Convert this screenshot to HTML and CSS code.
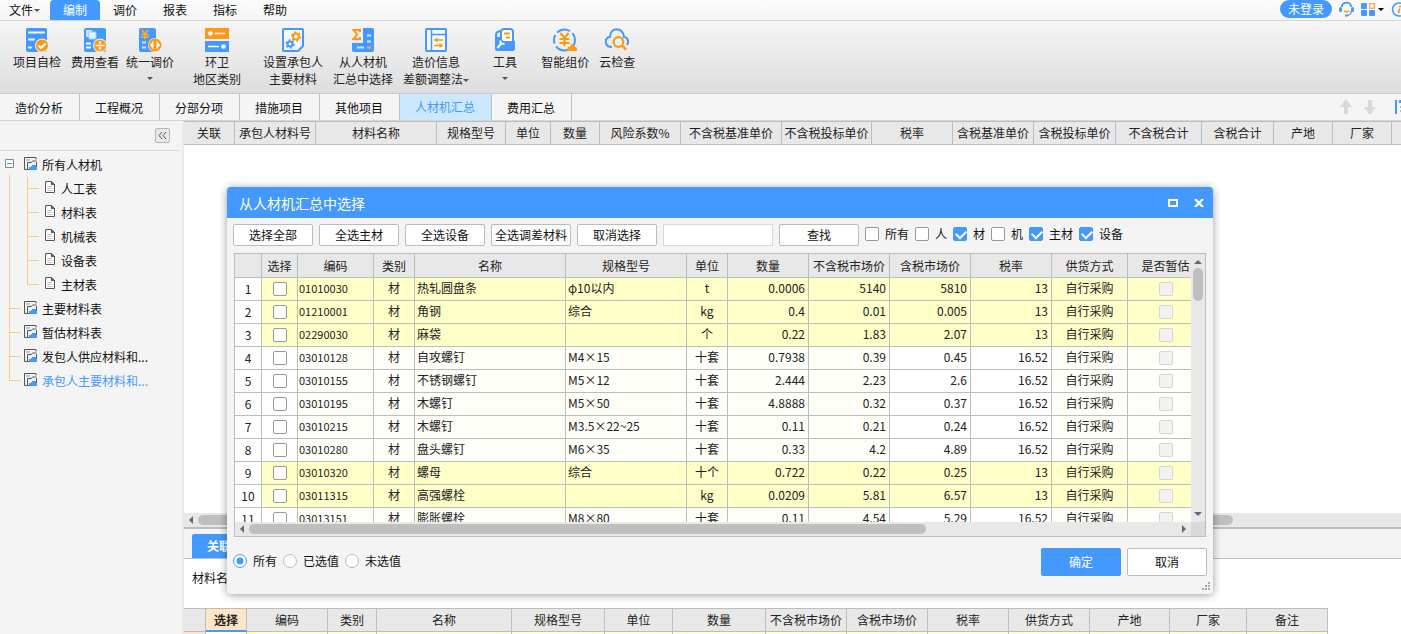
FILE: index.html
```html
<!DOCTYPE html>
<html lang="zh-CN">
<head>
    <meta charset="UTF-8">
    <meta name="viewport" content="width=device-width, initial-scale=1.0">
    <title>人材机汇总</title>
    <link rel="stylesheet" href="styles.css">
</head>

<body>
    <svg class="defs" width="0" height="0" aria-hidden="true">
        <symbol id="i-report" viewBox="0 0 13 13">
            <path d="M5 12.500H.5V.5h11.500v2M12.500 5v7.500H5" fill="none" stroke="#555"/>
            <path d="M3.500 12V5.500h4l1-1.500h4" fill="none" stroke="#555"/>
            <path d="M2 2h4v2H2z" fill="#9cf"/>
            <path d="M5 13v-3h2l1-2h4v1l1 1v3z" fill="#49f"/>
        </symbol>
        <symbol id="i-page" viewBox="0 0 10 12">
            <path d="M.5.500h6l3 3v8h-9z" fill="#fff" stroke="#555"/>
            <path d="M6.500.5v3h3" fill="#555" stroke="#555"/>
            <path d="M2 5.500h5M2 7.500h5M2 9.500h5" stroke="#ccc"/>
        </symbol>
    </svg>

    <header class="menubar">
        <nav class="menu">
            <a class="file" href="#">文件<span class="caret"></span></a>
            <a class="on" href="#">编制</a>
            <a href="#">调价</a>
            <a href="#">报表</a>
            <a href="#">指标</a>
            <a href="#">帮助</a>
        </nav>
        <div class="user">
            <button class="login">未登录</button>
            <svg class="headset" width="15" height="16" viewBox="0 0 15 16">
                <path d="M12.500 10c-.5 3-2.500 4.500-5 4.500" fill="none" stroke="#49f" stroke-width="1.500"/>
                <path d="M2.800 6C2.800.2 12.200.2 12.200 6" fill="none" stroke="#49f" stroke-width="1.800"/>
                <rect x="0" y="6" width="3" height="5" rx="1.500" fill="#49f"/>
                <rect x="12" y="6" width="3" height="5" rx="1.500" fill="#49f"/>
                <path d="M5 9.500c1.500 1.800 3.500 1.800 5 0" fill="none" stroke="#f93" stroke-width="1.800"/>
                <circle cx="7.500" cy="14.500" r="1.300" fill="#49f"/>
            </svg>
            <svg width="14" height="14" viewBox="0 0 14 14">
                <rect x="0" y="1" width="6" height="6" rx="1" fill="#49f"/>
                <rect x="8.700" y="1.700" width="4.600" height="4.600" fill="#fff" stroke="#fa4" stroke-width="1.400"/>
                <rect x="0" y="8" width="6" height="6" rx="1" fill="#49f"/>
                <rect x="8" y="8" width="6" height="6" rx="1" fill="#49f"/>
            </svg>
            <span class="caret black"></span>
            <svg width="16" height="16" viewBox="0 0 16 16">
                <circle cx="8" cy="8.500" r="6.500" fill="none" stroke="#49f" stroke-width="1.500"/>
                <path d="M9 4.500v1.800M8.500 7.500l-1 4.500" stroke="#f93" stroke-width="2"/>
            </svg>
        </div>
    </header>

    <div class="ribbon">
        <div class="group">
            <button>
                <svg width="24" height="24" viewBox="0 0 24 24">
                    <rect x="1" width="21" height="24" rx="2" fill="#49f"/>
                    <path d="M4 4.500h15M4 11.500h5M4 19.500h2" stroke="#fff" stroke-width="2" stroke-linecap="round"/>
                    <circle cx="17" cy="17.500" r="7" fill="#eee"/>
                    <circle cx="17" cy="17.500" r="6" fill="#f91"/>
                    <path d="M13.500 17.500l2.500 2.500 4.500-4.500" fill="none" stroke="#fff" stroke-width="2"/>
                </svg>
                <span>项目自检</span>
            </button>
            <button>
                <svg width="24" height="24" viewBox="0 0 24 24">
                    <rect x="1" width="22" height="24" rx="2" fill="#49f"/>
                    <path d="M3 2h6v7H3z" fill="#cfe4ff"/>
                    <path d="M6 4h7v7H6z" fill="#e8f2ff" stroke="#9cf"/>
                    <path d="M3 15.500h5M3 19.500h5" stroke="#fff" stroke-width="2"/>
                    <circle cx="17" cy="17.500" r="7" fill="#eee"/>
                    <circle cx="17" cy="17.500" r="6" fill="#f91"/>
                    <path d="M12.500 17.500h9" stroke="#fff" stroke-width="1.600"/>
                    <circle cx="17" cy="14.500" r="1.300" fill="#fff"/>
                    <circle cx="17" cy="20.500" r="1.300" fill="#fff"/>
                </svg>
                <span>费用查看</span>
            </button>
            <button class="drop">
                <svg width="24" height="24" viewBox="0 0 24 24">
                    <rect x="1" width="17" height="24" rx="2" fill="#49f"/>
                    <path d="M4 2l3 4 3-4M3 6.500h8M3 9h8M7 6v5" fill="none" stroke="#fa2" stroke-width="1.700"/>
                    <path d="M4 14.500h4M4 19.500h4" stroke="#cfe4ff" stroke-width="1.800"/>
                    <circle cx="17" cy="17" r="7" fill="#eee"/>
                    <circle cx="17" cy="17" r="6.500" fill="#f91"/>
                    <path d="M15.500 12.500v9l-3.500-4.500zM18.500 12.500v9l3.500-4.500z" fill="#fff"/>
                </svg>
                <span>统一调价</span>
                <i class="caret"></i>
            </button>
        </div>
        <div class="group">
            <button>
                <svg width="24" height="24" viewBox="0 0 24 24">
                    <path d="M0 0h24v11H0z" fill="#f91"/>
                    <path d="M0 13h24v11H0z" fill="#49f"/>
                    <path d="M10 5.500h10M3 18.500h11" stroke="#fff" stroke-width="1.600"/>
                    <circle cx="5.500" cy="5.500" r="2.300" fill="#fff"/>
                    <circle cx="18.500" cy="18.500" r="2.300" fill="#fff"/>
                </svg>
                <span>环卫<br>地区类别</span>
            </button>
        </div>
        <div class="group">
            <button>
                <svg width="24" height="24" viewBox="0 0 24 24">
                    <path d="M3 1h18q1 0 1 1v16l-5 5H3q-1 0-1-1V2q0-1 1-1z" fill="#f6faff" stroke="#49f" stroke-width="2"/>
                    <circle cx="15" cy="8.500" r="3" fill="none" stroke="#f91" stroke-width="2"/>
                    <circle cx="15" cy="8.500" r="4.500" fill="none" stroke="#f91" stroke-width="1.400" stroke-dasharray="2.200 2.500"/>
                    <circle cx="9" cy="16" r="2.500" fill="none" stroke="#49f" stroke-width="2"/>
                    <circle cx="9" cy="16" r="4" fill="none" stroke="#49f" stroke-width="1.400" stroke-dasharray="2 2.200"/>
                </svg>
                <span>设置承包人<br>主要材料</span>
            </button>
            <button>
                <svg width="24" height="24" viewBox="0 0 24 24">
                    <path d="M12 0h9q2 0 2 2v20q0 2-2 2H3q-2 0-2-2v-7h11z" fill="#49f"/>
                    <path d="M9 4V2H2.500l3.500 4.500L2.500 11H9V9" fill="none" stroke="#f91" stroke-width="2"/>
                    <path d="M16 7.500h4M16 13.500h4M6 19.500h7" stroke="#cfe4ff" stroke-width="1.800"/>
                    <path d="M16 19.500h4" stroke="#fa2" stroke-width="2"/>
                </svg>
                <span>从人材机<br>汇总中选择</span>
            </button>
            <button>
                <svg width="24" height="24" viewBox="0 0 24 24">
                    <rect x="2" y="1" width="20" height="22" rx="1" fill="#f4f9ff" stroke="#49f" stroke-width="2"/>
                    <path d="M7.500 1v22M7.500 6.500H22" stroke="#49f" stroke-width="1.500"/>
                    <path d="M10 12h9M10 17.500h9" stroke="#f91" stroke-width="1.500"/>
                    <path d="M10 12l3.500-2.500v5zM19 17.500L15.500 15v5z" fill="#f91"/>
                </svg>
                <span>造价信息<br>差额调整法<i class="caret inline"></i></span>
            </button>
        </div>
        <div class="group">
            <button>
                <svg width="24" height="24" viewBox="0 0 24 24">
                    <path d="M3 11V7q0-3 4-4" fill="none" stroke="#49f" stroke-width="2"/>
                    <path d="M8 14V4q0-3 3-3h6q3 0 3 3v12" fill="#fff" stroke="#49f" stroke-width="2"/>
                    <path d="M11 5.500h6M13 9.500h4" stroke="#f91" stroke-width="2"/>
                    <path d="M2 9h5l3 4h12v8q0 2-2 2H4q-2 0-2-2z" fill="#49f"/>
                    <path d="M4.500 20l4-5" stroke="#fff" stroke-width="2.200"/>
                    <path d="M7.500 12.500q-1 4 4 3" fill="none" stroke="#fff" stroke-width="2"/>
                </svg>
                <span>工具</span>
                <i class="caret"></i>
            </button>
        </div>
        <div class="group">
            <button>
                <svg width="24" height="24" viewBox="0 0 24 24">
                    <circle cx="11.500" cy="12" r="10.500" fill="none" stroke="#49f" stroke-width="2" stroke-dasharray="9 3 14 3"/>
                    <path d="M7.500 5l4 5 4-5M6.500 11h10M6.500 15h10M11.500 10v8" fill="none" stroke="#f91" stroke-width="2.200"/>
                    <path d="M14.500 23q-1-4.500 2.500-4.500 2-5.500 4.500 0 3 0 2.500 4.500z" fill="#f91"/>
                </svg>
                <span>智能组价</span>
            </button>
            <button>
                <svg width="24" height="24" viewBox="0 0 24 24">
                    <path d="M7 19C-1 19-1 9 5 9 5-1.500 18-1.500 19 9c4 0 5 5 3 8" fill="none" stroke="#49f" stroke-width="2"/>
                    <circle cx="13.500" cy="14" r="4.800" fill="none" stroke="#f91" stroke-width="2.200"/>
                    <path d="M17 17.500l4 4" stroke="#f91" stroke-width="2.500"/>
                </svg>
                <span>云检查</span>
            </button>
        </div>
    </div>

    <nav class="tabs">
        <a href="#">造价分析</a>
        <a href="#">工程概况</a>
        <a href="#">分部分项</a>
        <a href="#">措施项目</a>
        <a href="#">其他项目</a>
        <a class="on" href="#">人材机汇总</a>
        <a href="#">费用汇总</a>
        <div class="move">
            <svg width="12" height="16" viewBox="0 0 12 16"><path d="M6 0l6 8H8v7H4V8H0z" fill="#d8d8d8"/></svg>
            <svg width="12" height="16" viewBox="0 0 12 16"><path d="M6 16l6-8H8V1H4v7H0z" fill="#d8d8d8"/></svg>
            <svg width="16" height="16" viewBox="0 0 16 16">
                <path d="M1 1v14" stroke="#49f" stroke-width="2"/>
                <path d="M4 2.500h12" stroke="#49f" stroke-width="3"/>
                <path d="M5 8h10M5 12h10" stroke="#fa4" stroke-width="2"/>
            </svg>
        </div>
    </nav>

    <div class="main">
        <aside class="side">
            <div class="side-top">
                <button class="fold" aria-label="收起">
                    <svg width="9" height="9" viewBox="0 0 9 9"><path d="M4 1L1 4.500 4 8M8 1L5 4.500 8 8" fill="none" stroke="#555"/></svg>
                </button>
            </div>
            <ul class="tree">
                <li>
                    <div class="node root">
                        <svg width="9" height="9" viewBox="0 0 9 9"><path d="M.5.500h8v8h-8z" fill="#fff" stroke="#888"/><path d="M2 4.500h5" stroke="#3ac"/></svg>
                        <svg width="13" height="13"><use href="#i-report"/></svg>
                        <a href="#">所有人材机</a>
                    </div>
                    <ul class="sub">
                        <li class="node"><svg width="10" height="12"><use href="#i-page"/></svg><a href="#">人工表</a></li>
                        <li class="node"><svg width="10" height="12"><use href="#i-page"/></svg><a href="#">材料表</a></li>
                        <li class="node"><svg width="10" height="12"><use href="#i-page"/></svg><a href="#">机械表</a></li>
                        <li class="node"><svg width="10" height="12"><use href="#i-page"/></svg><a href="#">设备表</a></li>
                        <li class="node"><svg width="10" height="12"><use href="#i-page"/></svg><a href="#">主材表</a></li>
                    </ul>
                </li>
                <li class="node top"><svg width="13" height="13"><use href="#i-report"/></svg><a href="#">主要材料表</a></li>
                <li class="node top"><svg width="13" height="13"><use href="#i-report"/></svg><a href="#">暂估材料表</a></li>
                <li class="node top"><svg width="13" height="13"><use href="#i-report"/></svg><a href="#">发包人供应材料和...</a></li>
                <li class="node top"><svg width="13" height="13"><use href="#i-report"/></svg><a class="on" href="#">承包人主要材料和...</a></li>
            </ul>
        </aside>

        <section class="content">
            <div class="grid-box">
                <table class="grid">
                    <colgroup>
                        <col class="w51"><col class="w81"><col class="w121"><col class="w69"><col class="w45"><col class="w49"><col class="w81"><col class="w101"><col class="w90"><col class="w81"><col class="w81"><col class="w82"><col class="w86"><col class="w72"><col class="w59"><col class="w59"><col>
                    </colgroup>
                    <thead>
                        <tr>
                            <th>关联</th><th>承包人材料号</th><th>材料名称</th><th>规格型号</th><th>单位</th><th>数量</th><th>风险系数%</th><th>不含税基准单价</th><th>不含税投标单价</th><th>税率</th><th>含税基准单价</th><th>含税投标单价</th><th>不含税合计</th><th>含税合计</th><th>产地</th><th>厂家</th><th></th>
                        </tr>
                    </thead>
                </table>
            </div>
            <div class="hbar page-bar"><i class="arrow left"></i><div class="track"><div class="thumb"></div></div></div>

            <div class="panel-tabs"><a href="#">关联明细</a></div>
            <p class="info">材料名称：</p>
            <table class="grid detail">
                <colgroup>
                    <col class="w22"><col class="w41"><col class="w81"><col class="w49"><col class="w135"><col class="w93"><col class="w68"><col class="w93"><col class="w81"><col class="w81"><col class="w81"><col class="w81"><col class="w80"><col class="w77"><col class="w81">
                </colgroup>
                <thead>
                    <tr>
                        <th></th><th class="cur">选择</th><th>编码</th><th>类别</th><th>名称</th><th>规格型号</th><th>单位</th><th>数量</th><th>不含税市场价</th><th>含税市场价</th><th>税率</th><th>供货方式</th><th>产地</th><th>厂家</th><th>备注</th>
                    </tr>
                </thead>
                <tbody>
                    <tr><td class="mark"></td><td class="sel"></td><td></td><td></td><td></td><td></td><td></td><td></td><td></td><td></td><td></td><td></td><td></td><td></td><td></td></tr>
                </tbody>
            </table>
        </section>
    </div>

    <div class="dialog" role="dialog" aria-labelledby="dlg-title">
        <div class="title">
            <h1 id="dlg-title">从人材机汇总中选择</h1>
            <button aria-label="最大化"><svg width="10" height="8" viewBox="0 0 10 8"><path d="M1 1h8v6H1z" fill="none" stroke="#fff" stroke-width="2"/></svg></button>
            <button aria-label="关闭"><svg width="10" height="8" viewBox="0 0 10 8"><path d="M1 0l8 8M9 0L1 8" stroke="#fff" stroke-width="2.400"/></svg></button>
        </div>
        <div class="tools">
            <button class="btn">选择全部</button>
            <button class="btn">全选主材</button>
            <button class="btn">全选设备</button>
            <button class="btn">全选调差材料</button>
            <button class="btn">取消选择</button>
            <input class="key" type="text" aria-label="查找内容">
            <button class="btn">查找</button>
            <label><input type="checkbox">所有</label>
            <label><input type="checkbox">人</label>
            <label><input type="checkbox" checked>材</label>
            <label><input type="checkbox">机</label>
            <label><input type="checkbox" checked>主材</label>
            <label><input type="checkbox" checked>设备</label>
        </div>

        <div class="list">
            <div class="view">
                <table class="grid data">
                    <colgroup>
                        <col class="w27"><col class="w36"><col class="w76"><col class="w41"><col class="w151"><col class="w121"><col class="w41"><col class="w81"><col class="w81"><col class="w81"><col class="w81"><col class="w76"><col class="w76">
                    </colgroup>
                    <thead>
                        <tr><th></th><th>选择</th><th>编码</th><th>类别</th><th>名称</th><th>规格型号</th><th>单位</th><th>数量</th><th>不含税市场价</th><th>含税市场价</th><th>税率</th><th>供货方式</th><th>是否暂估</th></tr>
                    </thead>
                    <tbody>
                        <tr class="y"><th>1</th><td><input type="checkbox" aria-label="选择1"></td><td>01010030</td><td>材</td><td>热轧圆盘条</td><td>φ10以内</td><td>t</td><td>0.0006</td><td>5140</td><td>5810</td><td>13</td><td>自行采购</td><td><input type="checkbox" aria-label="暂估1" disabled></td></tr>
                        <tr class="y"><th>2</th><td><input type="checkbox" aria-label="选择2"></td><td>01210001</td><td>材</td><td>角钢</td><td>综合</td><td>kg</td><td>0.4</td><td>0.01</td><td>0.005</td><td>13</td><td>自行采购</td><td><input type="checkbox" aria-label="暂估2" disabled></td></tr>
                        <tr class="y"><th>3</th><td><input type="checkbox" aria-label="选择3"></td><td>02290030</td><td>材</td><td>麻袋</td><td></td><td>个</td><td>0.22</td><td>1.83</td><td>2.07</td><td>13</td><td>自行采购</td><td><input type="checkbox" aria-label="暂估3" disabled></td></tr>
                        <tr><th>4</th><td><input type="checkbox" aria-label="选择4"></td><td>03010128</td><td>材</td><td>自攻螺钉</td><td>M4×15</td><td>十套</td><td>0.7938</td><td>0.39</td><td>0.45</td><td>16.52</td><td>自行采购</td><td><input type="checkbox" aria-label="暂估4" disabled></td></tr>
                        <tr><th>5</th><td><input type="checkbox" aria-label="选择5"></td><td>03010155</td><td>材</td><td>不锈钢螺钉</td><td>M5×12</td><td>十套</td><td>2.444</td><td>2.23</td><td>2.6</td><td>16.52</td><td>自行采购</td><td><input type="checkbox" aria-label="暂估5" disabled></td></tr>
                        <tr><th>6</th><td><input type="checkbox" aria-label="选择6"></td><td>03010195</td><td>材</td><td>木螺钉</td><td>M5×50</td><td>十套</td><td>4.8888</td><td>0.32</td><td>0.37</td><td>16.52</td><td>自行采购</td><td><input type="checkbox" aria-label="暂估6" disabled></td></tr>
                        <tr><th>7</th><td><input type="checkbox" aria-label="选择7"></td><td>03010215</td><td>材</td><td>木螺钉</td><td>M3.5×22~25</td><td>十套</td><td>0.11</td><td>0.21</td><td>0.24</td><td>16.52</td><td>自行采购</td><td><input type="checkbox" aria-label="暂估7" disabled></td></tr>
                        <tr><th>8</th><td><input type="checkbox" aria-label="选择8"></td><td>03010280</td><td>材</td><td>盘头螺钉</td><td>M6×35</td><td>十套</td><td>0.33</td><td>4.2</td><td>4.89</td><td>16.52</td><td>自行采购</td><td><input type="checkbox" aria-label="暂估8" disabled></td></tr>
                        <tr class="y"><th>9</th><td><input type="checkbox" aria-label="选择9"></td><td>03010320</td><td>材</td><td>螺母</td><td>综合</td><td>十个</td><td>0.722</td><td>0.22</td><td>0.25</td><td>13</td><td>自行采购</td><td><input type="checkbox" aria-label="暂估9" disabled></td></tr>
                        <tr class="y"><th>10</th><td><input type="checkbox" aria-label="选择10"></td><td>03011315</td><td>材</td><td>高强螺栓</td><td></td><td>kg</td><td>0.0209</td><td>5.81</td><td>6.57</td><td>13</td><td>自行采购</td><td><input type="checkbox" aria-label="暂估10" disabled></td></tr>
                        <tr><th>11</th><td><input type="checkbox" aria-label="选择11"></td><td>03013151</td><td>材</td><td>膨胀螺栓</td><td>M8×80</td><td>十套</td><td>0.11</td><td>4.54</td><td>5.29</td><td>16.52</td><td>自行采购</td><td><input type="checkbox" aria-label="暂估11" disabled></td></tr>
                    </tbody>
                </table>
            </div>
            <div class="vbar"><i class="arrow up"></i><div class="thumb"></div><i class="arrow down"></i></div>
            <div class="hbar"><i class="arrow left"></i><div class="track"><div class="thumb"></div></div><i class="arrow right"></i></div>
            <div class="corner"></div>
        </div>

        <div class="foot">
            <label><input type="radio" name="range" checked>所有</label>
            <label><input type="radio" name="range">已选值</label>
            <label><input type="radio" name="range">未选值</label>
            <button class="btn ok">确定</button>
            <button class="btn">取消</button>
        </div>
        <svg class="grip" width="8" height="8" viewBox="0 0 8 8"><path d="M6 0h2v2H6zM3 3h2v2H3zM6 3h2v2H6zM0 6h2v2H0zM3 6h2v2H3zM6 6h2v2H6z" fill="#aaa"/></svg>
    </div>
</body>

</html>
```
FILE: styles.css
```css
* {
    box-sizing: border-box;
}

body {
    margin: 0;
    height: 100vh;
    display: flex;
    flex-direction: column;
    overflow: hidden;
    position: relative;
    background: #fff;
    color: #111;
    font: 12px/16px "Noto Sans CJK SC", "Liberation Sans", sans-serif;
}

a {
    color: inherit;
    text-decoration: none;
}

button {
    margin: 0;
    padding: 0;
    border: 0;
    background: none;
    color: inherit;
    font: inherit;
    white-space: nowrap;
}

ul {
    margin: 0;
    padding: 0;
    list-style: none;
}

svg {
    display: block;
    flex: none;
}

.defs {
    position: absolute;
}

.caret {
    border: 3px solid transparent;
    border-top-color: #555;
    border-bottom: 0;
}

.caret.black {
    border-top-color: #000;
}

/* 菜单 */
.menubar {
    flex: none;
    display: flex;
    justify-content: space-between;
    height: 21px;
    overflow: hidden;
    background: linear-gradient(#fbfbfb, #f5f5f5);
    border-bottom: 1px solid #d6d6d6;
}

.menu {
    display: flex;
}

.menu a {
    width: 50px;
    line-height: 20px;
    text-align: center;
}

.menu .file {
    display: flex;
    align-items: center;
    gap: 1px;
    padding-left: 9px;
}

.menu .on {
    background: #49f;
    color: #fff;
    border-radius: 4px 4px 0 0;
}

.user {
    display: flex;
    align-items: center;
    gap: 7px;
    height: 18px;
    margin-right: -6px;
}

.user .caret {
    margin-left: -4px;
}

.login {
    width: 52px;
    height: 18px;
    line-height: 18px;
    border-radius: 9px;
    background: #49f;
    color: #fff;
}

/* 工具栏 */
.ribbon {
    flex: none;
    display: flex;
    gap: 12px;
    height: 73px;
    padding: 7px 8px 0;
    background: linear-gradient(#f5f5f5, #dedede);
    border-bottom: 1px solid #c9c9c9;
}

.group {
    display: flex;
    align-items: flex-start;
}

.group:nth-child(n+4) {
    margin-left: 2px;
}

.ribbon button {
    display: flex;
    flex-direction: column;
    align-items: center;
    padding: 0 5px;
    line-height: 17px;
    color: #222;
}

.ribbon button.drop {
    padding: 0 2px;
}

.ribbon button > span {
    margin-top: 1px;
}

.ribbon button > .caret {
    margin-top: 7px;
}

.caret.inline {
    display: inline-block;
    vertical-align: middle;
}

.tabs {
    flex: none;
    display: flex;
    height: 27px;
    background: #f5f5f5;
    border-bottom: 1px solid #d6d6d6;
}

.tabs a {
    padding: 0 16px 0 15px;
    line-height: 28px;
    border-right: 1px solid #c0c0c0;
}

.tabs .on {
    background: #cce8ff;
    color: #49f;
    line-height: 26px;
}

.move {
    flex: 1;
    display: flex;
    justify-content: flex-end;
    align-items: center;
    gap: 12px;
    margin-right: -10px;
    overflow: hidden;
}

.move svg:last-child {
    margin-left: 7px;
}

.main {
    flex: 1;
    min-height: 0;
    display: flex;
}

/* 左侧树 */
.side {
    flex: none;
    width: 184px;
    background: #f4f4f4;
    border-right: 2px solid #eaeaea;
}

.side-top {
    display: flex;
    justify-content: flex-end;
    align-items: center;
    width: 180px;
    height: 30px;
    padding-right: 10px;
    border-bottom: 1px solid #dcdcdc;
}

.fold {
    width: 15px;
    height: 15px;
    padding: 2px;
    border: 1px solid #b5b5b5;
    border-radius: 2px;
    background: #e8e8e8;
}

.tree {
    margin-top: 2px;
    background: linear-gradient(#fdc886, #fdc886) no-repeat 9px 22px / 1px calc(100% - 35px);
}

.sub {
    background: linear-gradient(#fdc886, #fdc886) no-repeat 27px 0 / 1px calc(100% - 13px);
}

.node {
    display: flex;
    height: 24px;
    line-height: 24px;
    white-space: nowrap;
}

.node svg {
    margin-top: 4px;
}

.node a {
    margin-left: 5px;
}

.node .on {
    color: #49f;
}

.root {
    padding-left: 5px;
}

.root svg:first-child {
    margin: 6px 10px 0 0;
}

.top::before,
.sub .node::before {
    content: "";
    width: 12px;
    height: 11px;
    margin: 0 3px 0 9px;
    border-bottom: 1px solid #fdc886;
}

.sub .node::before {
    margin: 0 6px 0 27px;
}

.sub .node a {
    margin-left: 6px;
}

/* 表格 */
.content {
    flex: 1;
    min-width: 0;
    display: flex;
    flex-direction: column;
}

.grid {
    table-layout: fixed;
    width: 100%;
    border-spacing: 0;
    border-top: 1px solid #bdbdbd;
    color: #222;
}

.grid th,
.grid td {
    padding: 0;
    line-height: 22px;
    border-right: 1px solid #bdbdbd;
    border-bottom: 1px solid #bdbdbd;
    font-weight: normal;
    white-space: nowrap;
}

.grid thead th {
    height: 23px;
    background: #e8e8e8;
}

.w22 { width: 22px; }
.w27 { width: 27px; }
.w36 { width: 36px; }
.w41 { width: 41px; }
.w45 { width: 45px; }
.w49 { width: 49px; }
.w51 { width: 51px; }
.w59 { width: 59px; }
.w68 { width: 68px; }
.w69 { width: 69px; }
.w72 { width: 72px; }
.w76 { width: 76px; }
.w77 { width: 77px; }
.w80 { width: 80px; }
.w81 { width: 81px; }
.w82 { width: 82px; }
.w86 { width: 86px; }
.w90 { width: 90px; }
.w93 { width: 93px; }
.w101 { width: 101px; }
.w121 { width: 121px; }
.w135 { width: 135px; }
.w151 { width: 151px; }

.grid-box {
    flex: 1;
    overflow: hidden;
}

.grid-box th:last-child {
    border-right: 0;
}

/* 滚动条 */
.hbar,
.vbar {
    flex: none;
    display: flex;
    align-items: center;
    background: #e8e8e8;
}

.hbar {
    height: 14px;
    padding: 0 5px;
}

.vbar {
    flex-direction: column;
    width: 14px;
    padding: 6px 0;
}

.track {
    flex: 1;
    padding: 0 5px;
}

.thumb {
    height: 10px;
    border-radius: 5px;
    background: #bfbfbf;
}

.arrow {
    border: 4px solid transparent;
}

.arrow.left {
    border-right-color: #667;
    border-left: 0;
}

.arrow.right {
    border-left-color: #667;
    border-right: 0;
}

.arrow.up {
    border-bottom-color: #667;
    border-top: 0;
}

.arrow.down {
    border-top-color: #667;
    border-bottom: 0;
    margin-top: auto;
}

.page-bar {
    padding-right: 0;
}

.page-bar .track {
    padding-right: 0;
}

.page-bar .thumb {
    width: 86%;
}

.panel-tabs {
    flex: none;
    display: flex;
    height: 32px;
    padding: 5px 8px 0;
    background: #f4f4f4;
    border-top: 2px solid #bdbdbd;
    border-bottom: 1px solid #bdbdbd;
}

.panel-tabs a {
    padding: 0 15px;
    line-height: 24px;
    background: #49f;
    color: #fff;
    font-weight: bold;
    border-radius: 2px 2px 0 0;
}

.info {
    flex: none;
    margin: 0;
    padding: 0 8px;
    height: 49px;
    line-height: 38px;
}

.detail {
    flex: none;
    width: 1144px;
    margin-bottom: -20px;
}

.detail .cur {
    background: #fee5c8;
    line-height: 21px;
    font-weight: bold;
    border-bottom: 2px solid #49f;
}

.detail td {
    height: 22px;
    background: #ffffc8;
}

.detail .mark {
    background: #fee5c8;
}

.detail .sel {
    background: #fff;
}

/* 弹窗 */
.dialog {
    position: absolute;
    top: 187px;
    left: 227px;
    right: 188px;
    background: #f4f4f4;
    border-radius: 4px;
    box-shadow: 0 1px 8px rgba(0, 0, 0, .4);
}

.title {
    display: flex;
    align-items: center;
    gap: 16px;
    height: 31px;
    padding: 0 9px 0 12px;
    border-radius: 4px 4px 0 0;
    background: #49f;
    color: #fff;
}

.title h1 {
    flex: 1;
    margin: 0;
    font-size: 14px;
    font-weight: normal;
    line-height: 32px;
}

.tools,
.foot {
    display: flex;
    align-items: center;
    gap: 6px;
    padding: 6px 6px 0;
    color: #111;
}

.btn {
    width: 80px;
    height: 22px;
    line-height: 20px;
    border: 1px solid #bbb;
    border-radius: 2px;
    background: #fff;
}

.key {
    width: 110px;
    height: 22px;
    padding: 0 4px;
    border: 1px solid #d8d8d8;
    background: #fff;
    font: inherit;
}

label {
    display: flex;
    align-items: center;
    gap: 6px;
    margin-bottom: 2px;
    white-space: nowrap;
}

input[type=checkbox],
input[type=radio] {
    appearance: none;
    flex: none;
    display: block;
    width: 14px;
    height: 14px;
    margin: 0;
    border: 1px solid #999;
    border-radius: 2px;
    background: #fff;
}

input[type=checkbox]:checked {
    border-color: #49f;
    background: #49f;
}

input[type=checkbox]:checked::before {
    content: "";
    display: block;
    width: 8px;
    height: 5px;
    margin: 2px;
    border: 2px solid #fff;
    border-top: 0;
    border-right: 0;
    transform: rotate(-45deg);
}

input[type=checkbox]:disabled {
    border-color: #d6d6d6;
    background: #f2f2f2;
}

input[type=radio] {
    border-color: #bbb;
    border-radius: 50%;
}

input[type=radio]:checked {
    border-color: #49f;
    background: radial-gradient(#49f 3px, #fff 4px);
}

.list {
    display: grid;
    grid-template-columns: 1fr 14px;
    grid-template-rows: 268px 14px;
    margin: 7px 7px 0;
    border: 1px solid #bdbdbd;
}

.view {
    overflow: hidden;
    background: #fff;
}

.data {
    width: 969px;
    border-top: 0;
}

.data thead th {
    height: 24px;
}

.data td {
    height: 23px;
    background: #fffffa;
    line-height: 20px;
    text-align: center;
    vertical-align: top;
}

.data td:nth-child(2),
.data td:last-child {
    vertical-align: middle;
}

.data td:nth-child(3) {
    padding-left: 1px;
    font-size: 11px;
    text-align: left;
}

.data td:nth-child(5),
.data td:nth-child(6) {
    padding-left: 2px;
    text-align: left;
}

.data td:nth-child(n+8):nth-child(-n+11) {
    padding-right: 3px;
    text-align: right;
}

.data td:nth-child(2),
.data td:nth-child(10),
.data td:nth-child(11) {
    background: #fff;
}

.data tr.y td:nth-child(n) {
    background: #ffffc8;
}

.data td input[type=checkbox] {
    margin: 0 auto;
}

.list .vbar .thumb {
    width: 10px;
    height: 33px;
    margin-top: 4px;
}

.list .hbar .thumb {
    width: 73%;
}

.corner {
    background: #d9d9d9;
}

.foot {
    padding-top: 11px;
    padding-bottom: 18px;
}

.foot .btn {
    height: 28px;
    line-height: 26px;
}

.foot .ok {
    margin-left: auto;
    border-color: #49f;
    background: #49f;
    color: #fff;
}

.grip {
    position: absolute;
    right: 3px;
    bottom: 4px;
}
```
